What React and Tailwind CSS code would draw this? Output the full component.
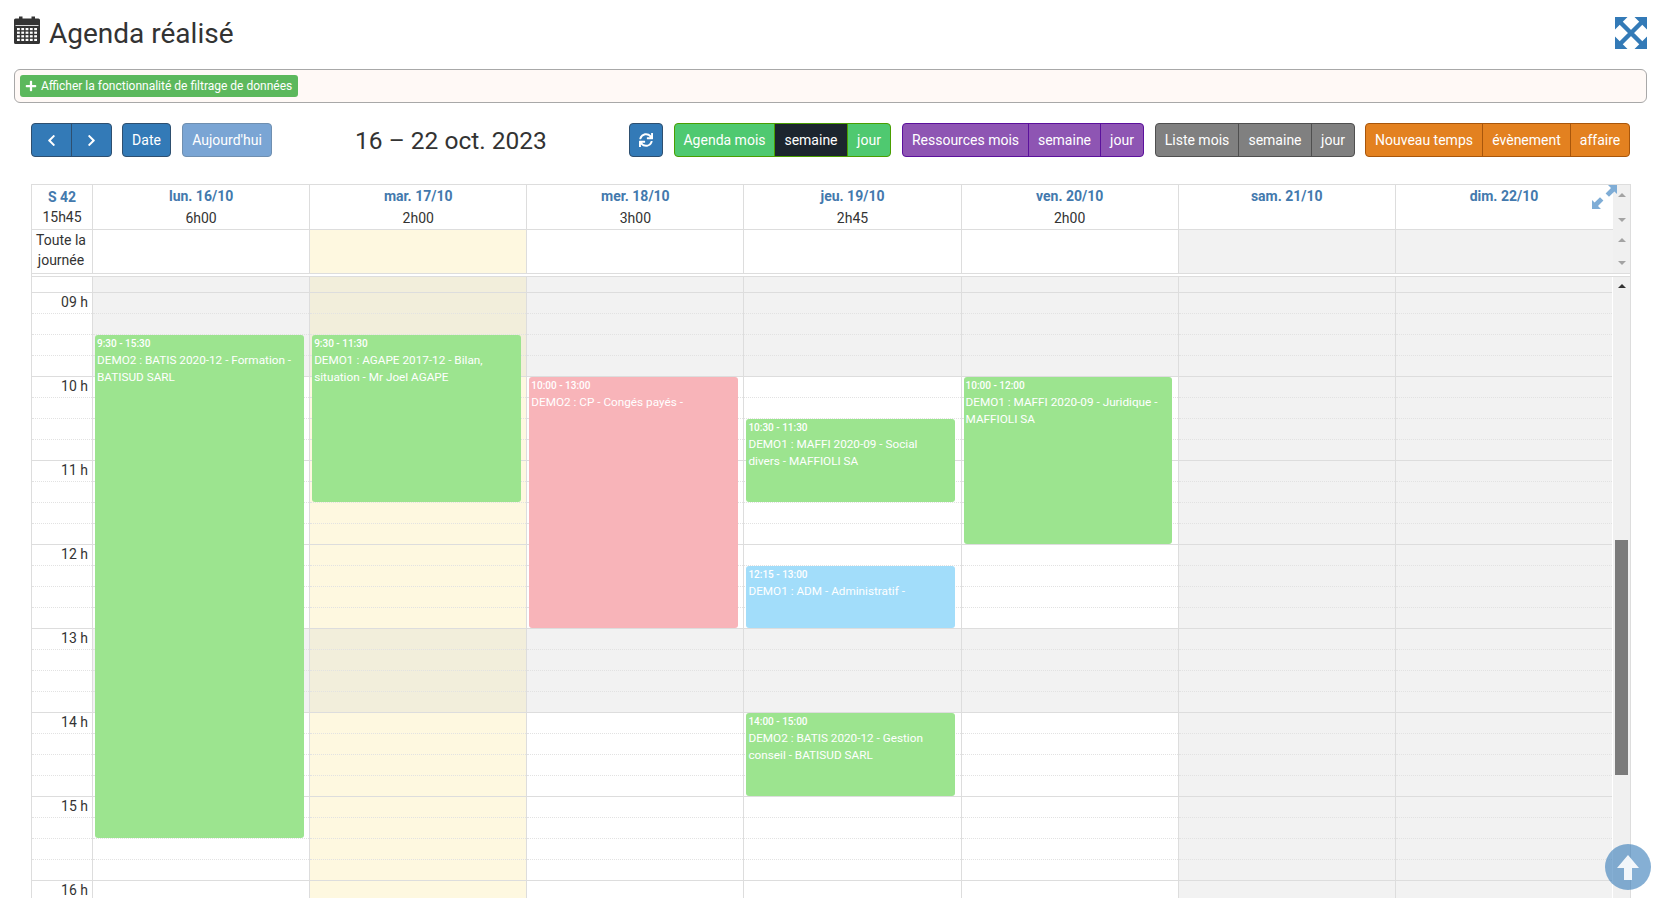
import React from 'react';
import { FaSync, FaChevronLeft, FaChevronRight, FaPlus } from 'react-icons/fa';

const DAYS = [
  { label: 'lun. 16/10', total: '6h00', tone: 'normal' },
  { label: 'mar. 17/10', total: '2h00', tone: 'today' },
  { label: 'mer. 18/10', total: '3h00', tone: 'normal' },
  { label: 'jeu. 19/10', total: '2h45', tone: 'normal' },
  { label: 'ven. 20/10', total: '2h00', tone: 'normal' },
  { label: 'sam. 21/10', total: '', tone: 'weekend' },
  { label: 'dim. 22/10', total: '', tone: 'weekend' }
];

const EVENTS = {
  0: [{ top: 58, height: 503, color: 'bg-[#9ce48f]', time: '9:30 - 15:30', text: 'DEMO2 : BATIS 2020-12 - Formation - BATISUD SARL' }],
  1: [{ top: 58, height: 167, color: 'bg-[#9ce48f]', time: '9:30 - 11:30', text: 'DEMO1 : AGAPE 2017-12 - Bilan, situation - Mr Joel AGAPE' }],
  2: [{ top: 100, height: 251, color: 'bg-[#f8b4b9]', time: '10:00 - 13:00', text: 'DEMO2 : CP - Congés payés -' }],
  3: [
    { top: 142, height: 83, color: 'bg-[#9ce48f]', time: '10:30 - 11:30', text: 'DEMO1 : MAFFI 2020-09 - Social divers - MAFFIOLI SA' },
    { top: 289, height: 62, color: 'bg-[#a2ddfa]', time: '12:15 - 13:00', text: 'DEMO1 : ADM - Administratif -' },
    { top: 436, height: 83, color: 'bg-[#9ce48f]', time: '14:00 - 15:00', text: 'DEMO2 : BATIS 2020-12 - Gestion conseil - BATISUD SARL' }
  ],
  4: [{ top: 100, height: 167, color: 'bg-[#9ce48f]', time: '10:00 - 12:00', text: 'DEMO1 : MAFFI 2020-09 - Juridique - MAFFIOLI SA' }]
};

const HOURS = ['09 h', '10 h', '11 h', '12 h', '13 h', '14 h', '15 h', '16 h'];

const BUTTON_GROUPS = [
  { box: 'bg-[#4fc970] border-[#4a9e00] divide-[#4a9e00]', items: [['Agenda mois', 'w-[100px]'], ['semaine', 'w-[73px] bg-[#1c252e]'], ['jour', 'w-[42px]']] },
  { box: 'bg-[#8e55b3] border-[#5b119c] divide-[#5b119c]', items: [['Ressources mois', 'w-[126px]'], ['semaine', 'w-[72px]'], ['jour', 'w-[42px]']] },
  { box: 'bg-[#808080] border-[#4f4f4f] divide-[#4f4f4f]', items: [['Liste mois', 'w-[83px]'], ['semaine', 'w-[73px]'], ['jour', 'w-[42px]']] },
  { box: 'bg-[#e38120] border-[#a8560b] divide-[#a8560b] -ml-px', items: [['Nouveau temps', 'w-[117px]'], ['évènement', 'w-[88px]'], ['affaire', 'w-[58px]']] }
];

const slotBackground = (tone, hourIndex) => {
  const closed = hourIndex === 0 || hourIndex === 4;
  if (tone === 'weekend') return 'bg-[#f2f2f2]';
  if (tone === 'today') return closed ? 'bg-[#f2eedb]' : 'bg-[#fef8e0]';
  return closed ? 'bg-[#f2f2f2]' : 'bg-white';
};

const CalendarIcon = () => (
  <svg viewBox="0 0 26 28" className="w-[26px] h-[28px] shrink-0 -mt-[6px] text-[#333]" fill="currentColor">
    <path d="M5 2.5V0.6h3.5v1.9h9V0.6H21v1.9h3.4A1.6 1.6 0 0 1 26 4.1v22.3a1.6 1.6 0 0 1-1.6 1.6H1.6A1.6 1.6 0 0 1 0 26.4V4.1a1.6 1.6 0 0 1 1.6-1.6Z" />
    <rect x="1.5" y="9" width="23" height="1" fill="#fff" opacity="0.8" />
    {[0, 1, 2, 3].map((r) =>
      [0, 1, 2, 3, 4].map((c) => (
        <rect key={`${r}-${c}`} x={3 + c * 4.3} y={12 + r * 3.6} width="2.8" height="2.2" fill="#fff" />
      ))
    )}
  </svg>
);

const ExpandIcon = ({ className }) => (
  <svg viewBox="0 0 32 32" className={className} fill="currentColor">
    <path d="M5 5 27 27M27 5 5 27" stroke="currentColor" strokeWidth="4.5" fill="none" />
    <path d="M0 0h12.5L9 3.5 3.5 9 0 12.5ZM32 0v12.5L28.5 9 23 3.5 19.5 0ZM0 32V19.5L3.5 23 9 28.5 12.5 32ZM32 32H19.5L23 28.5 28.5 23 32 19.5Z" />
  </svg>
);

const DiagonalArrows = () => (
  <svg viewBox="0 0 25 24" className="absolute right-[-5px] top-0 w-[25px] h-[24px] text-[#7fadd6]" fill="currentColor">
    <path d="M25 0v9l-2.6-2.6-5.4 5.4-3.4-3.4 5.4-5.4L16 0ZM0 24v-9l2.6 2.6 5.4-5.4 3.4 3.4-5.4 5.4L9 24Z" />
  </svg>
);

const ScrollArrow = ({ up, dark }) => (
  <span
    className={`block w-0 h-0 border-x-[4px] border-x-transparent ${up ? 'border-b-[4px]' : 'border-t-[4px]'} ${
      dark ? 'border-b-[#333]' : up ? 'border-b-[#a3a3a3]' : 'border-t-[#a3a3a3]'
    }`}
  />
);

const EventCard = ({ top, height, color, time, text }) => (
  <div
    className={`absolute left-[2px] right-[5.5px] rounded-[3px] pl-[2px] pr-[6px] pt-[2px] text-white overflow-hidden ${color}`}
    style={{ top, height }}
  >
    <div className="text-[10px] leading-[13px] font-medium">{time}</div>
    <div className="text-[11.75px] leading-[17px] mt-[2px]">{text}</div>
  </div>
);

const Toolbar = () => (
  <div className="flex items-start mt-[20px] ml-[17px] mr-[16px] text-[14px] leading-[20px] text-white">
    <div className="flex h-[34px] w-[81px] rounded-[4px] border border-[#2e4f6f] bg-[#337ab7]">
      <span className="flex-1 flex items-center justify-center border-r border-[#2e4f6f]"><FaChevronLeft className="w-[11px] h-[13px]" /></span>
      <span className="flex-1 flex items-center justify-center"><FaChevronRight className="w-[11px] h-[13px]" /></span>
    </div>
    <span className="ml-[10px] h-[34px] w-[49px] flex items-center justify-center rounded-[4px] border border-[#2e4f6f] bg-[#337ab7]">Date</span>
    <span className="ml-[11px] h-[34px] w-[90px] flex items-center justify-center rounded-[4px] border border-[#6f8fb0] bg-[#7aa5d4]">Aujourd'hui</span>
    <div className="w-[354px] pl-[4px] pt-[1px] text-center text-[24.5px] leading-[33px] text-[#333]">16 – 22 oct. 2023</div>
    <span className="ml-[3px] h-[34px] w-[34px] flex items-center justify-center rounded-[4px] border border-[#2e4f6f] bg-[#337ab7]"><FaSync className="w-[14px] h-[14px]" /></span>
    <div className="flex gap-[11px] ml-[11px]">
      {BUTTON_GROUPS.map((group) => (
        <div key={group.items[0][0]} className={`flex h-[34px] rounded-[4px] border overflow-hidden divide-x ${group.box}`}>
          {group.items.map(([label, width]) => (
            <span key={label} className={`flex items-center justify-center whitespace-nowrap ${width}`}>{label}</span>
          ))}
        </div>
      ))}
    </div>
  </div>
);

const CalendarHeader = () => (
  <div className="flex">
    <div className="flex-1 min-w-0">
      <div className="flex h-[45px] border-b border-[#ddd]">
        <div className="w-[61px] shrink-0 border-r border-[#ddd] text-center text-[14px] leading-[20px] pt-[2px]">
          <div className="font-bold text-[#4379ad]">S 42</div>
          <div className="text-[#333]">15h45</div>
        </div>
        {DAYS.map((day, i) => (
          <div key={day.label} className={`relative flex-1 text-center text-[14px] pt-[1px] border-r ${i < 6 ? 'border-[#ddd]' : 'border-transparent'}`}>
            <div className="font-bold leading-[20px] text-[#4379ad]">{day.label}</div>
            <div className="leading-[24px] text-[#333]">{day.total}</div>
            {i === 6 && <DiagonalArrows />}
          </div>
        ))}
      </div>
      <div className="flex h-[43px]">
        <div className="w-[61px] shrink-0 border-r border-[#ddd] pr-[2px] text-center text-[14px] leading-[20px] text-[#333]">Toute la journée</div>
        {DAYS.map((day, i) => (
          <div
            key={day.label}
            className={`flex-1 border-r ${i < 6 ? 'border-[#ddd]' : 'border-transparent'} ${
              day.tone === 'today' ? 'bg-[#fef8e0]' : day.tone === 'weekend' ? 'bg-[#f2f2f2]' : 'bg-white'
            }`}
          />
        ))}
      </div>
    </div>
    <div className="w-[17px] shrink-0 bg-[#f0f0f0] flex flex-col items-center">
      <div className="h-[45px] flex flex-col justify-between items-center py-[8px]"><ScrollArrow up /><ScrollArrow /></div>
      <div className="h-[43px] flex flex-col justify-between items-center py-[8px]"><ScrollArrow up /><ScrollArrow /></div>
    </div>
  </div>
);

const TimeGrid = () => (
  <div className="flex flex-1 min-h-0 overflow-hidden">
    <div className="flex flex-1 min-w-0">
      <div className="w-[61px] shrink-0 border-r border-[#ddd] bg-white">
        <div className="h-[16px] border-b border-[#ddd]" />
        {HOURS.map((hour) => (
          <div key={hour}>
            <div className="h-[21px] border-b border-dotted border-[#e2e2e2] text-right pr-[4px] text-[14px] leading-[19px] text-[#333]">{hour}</div>
            <div className="h-[21px] border-b border-dotted border-[#e2e2e2]" />
            <div className="h-[21px] border-b border-dotted border-[#e2e2e2]" />
            <div className="h-[21px] border-b border-[#ddd]" />
          </div>
        ))}
      </div>
      {DAYS.map((day, dayIndex) => (
        <div key={day.label} className={`relative flex-1 border-r ${dayIndex < 6 ? 'border-[#ddd]' : 'border-transparent'}`}>
          <div className={`h-[16px] border-b border-[#ddd] ${slotBackground(day.tone, 0)}`} />
          {HOURS.map((hour, hourIndex) => (
            <div key={hour} className={slotBackground(day.tone, hourIndex)}>
              <div className="h-[21px] border-b border-dotted border-[#e2e2e2]" />
              <div className="h-[21px] border-b border-dotted border-[#e2e2e2]" />
              <div className="h-[21px] border-b border-dotted border-[#e2e2e2]" />
              <div className="h-[21px] border-b border-[#ddd]" />
            </div>
          ))}
          {(EVENTS[dayIndex] || []).map((event) => (
            <EventCard key={event.time} {...event} />
          ))}
        </div>
      ))}
    </div>
    <div className="w-[17px] shrink-0 bg-[#f0f0f0] flex flex-col items-center pt-[7px]">
      <ScrollArrow up dark />
      <div className="w-[13px] h-[235px] bg-[#7b7b7b] mt-[252px]" />
    </div>
  </div>
);

export default function App() {
  return (
    <div className="relative h-screen overflow-hidden bg-white pl-[14px] pr-[14px] flex flex-col font-['Roboto',sans-serif]">
      <div className="flex items-center justify-between h-[69px] pb-[3px]">
        <div className="flex items-center gap-[9px]">
          <CalendarIcon />
          <h1 className="text-[28px] leading-[34px] pt-[2px] text-[#333]">Agenda réalisé</h1>
        </div>
        <ExpandIcon className="w-[32px] h-[32px] text-[#337ab7]" />
      </div>
      <div className="h-[34px] shrink-0 rounded-[6px] border border-[#a8a8a8] bg-[#fff9f6] px-[5px] pt-[5px] flex items-start">
        <span className="h-[22px] w-[278px] flex items-center gap-[4px] rounded-[3px] bg-[#5cb85c] pl-[5px] text-white text-[12px] whitespace-nowrap">
          <FaPlus className="w-[12px] h-[12px] shrink-0" />
          Afficher la fonctionnalité de filtrage de données
        </span>
      </div>
      <Toolbar />
      <div className="flex flex-1 min-h-0 flex-col mt-[27px] ml-[17px] mr-[16px] border-x border-t border-[#ddd]">
        <CalendarHeader />
        <div className="h-[4px] shrink-0 border-y border-[#ddd] bg-white" />
        <TimeGrid />
      </div>
      <button className="absolute left-[1605px] top-[844px] w-[46px] h-[46px] rounded-full bg-[#337ab7]/60 flex items-center justify-center">
        <svg viewBox="0 0 22 25" className="w-[22px] h-[25px] text-white/90" fill="currentColor">
          <path d="M11 0 22 13h-7v12H7V13H0Z" />
        </svg>
      </button>
    </div>
  );
}
